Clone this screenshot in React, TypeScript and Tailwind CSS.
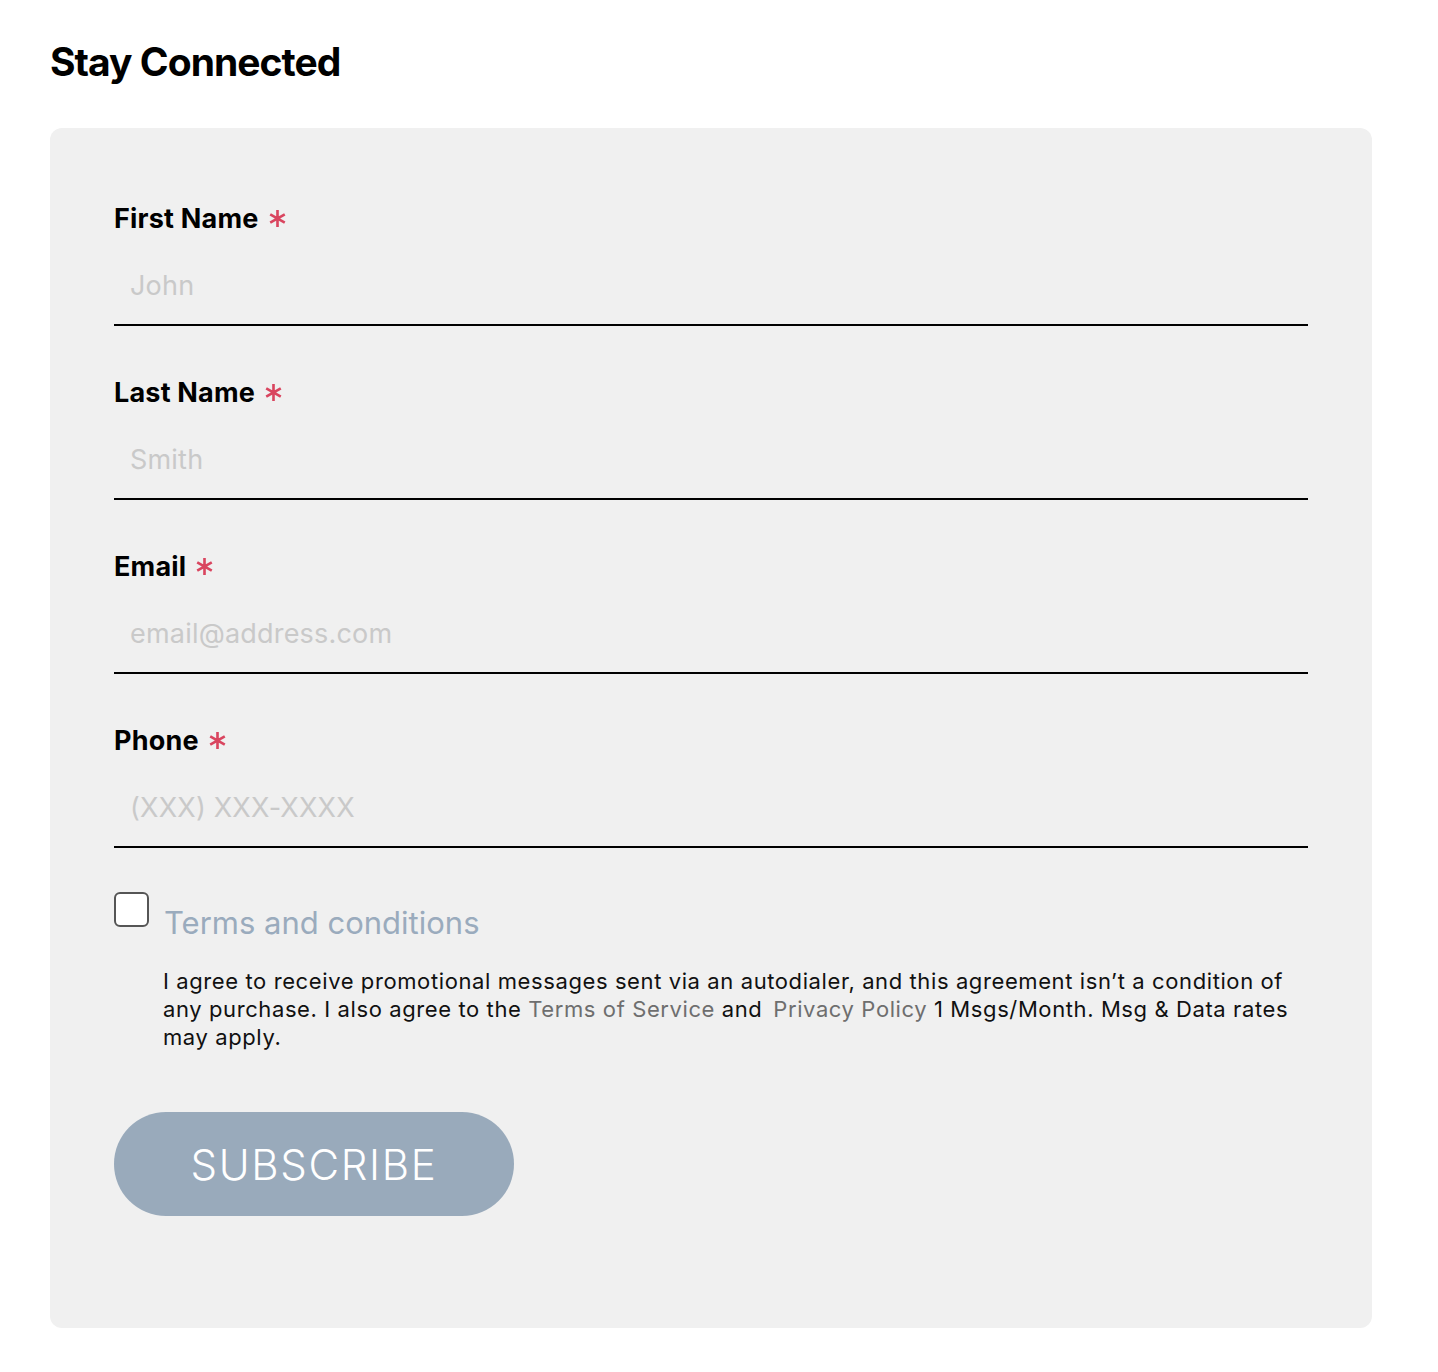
import { useState } from "react"

const fields = [
  { id: "first", label: "First Name", placeholder: "John", type: "text" },
  { id: "last", label: "Last Name", placeholder: "Smith", type: "text" },
  { id: "email", label: "Email", placeholder: "email@address.com", type: "email" },
  { id: "phone", label: "Phone", placeholder: "(XXX) XXX-XXXX", type: "tel" },
]

function Asterisk() {
  return (
    <svg viewBox="0 0 18 18" className="ml-[9px] h-[19px] w-[19px]" fill="none" stroke="#d9455f" strokeWidth="2.5">
      <path d="M9 1v16M2.1 5l13.8 8M2.1 13l13.8-8" />
    </svg>
  )
}

export default function App() {
  const [agreed, setAgreed] = useState(false)

  return (
    <div className="min-h-screen bg-white px-[50px] pt-[34px] pb-[44px] font-['Inter',sans-serif] text-black">
      <h2 className="text-[39px] font-bold leading-[56px] tracking-[-0.025em]">Stay Connected</h2>

      <form
        className="mt-[38px] w-[1322px] rounded-[12px] bg-[#f0f0f0] px-[64px] pt-[75px] pb-[112px]"
        onSubmit={(e) => e.preventDefault()}
      >
        <div className="flex flex-col gap-[51px]">
          {fields.map((f) => (
            <div key={f.id}>
              <label htmlFor={f.id} className="flex items-center text-[27px] font-bold leading-[31px] tracking-[0.2px]">
                {f.label}
                <Asterisk />
              </label>
              <input
                id={f.id}
                type={f.type}
                placeholder={f.placeholder}
                className="mt-[12px] block h-[80px] w-full border-b-2 border-black bg-transparent px-[16px] text-[27px] tracking-[0.2px] outline-none placeholder:text-[#c9c9c9]"
              />
            </div>
          ))}
        </div>

        <div className="mt-[44px] flex items-start">
          <input
            type="checkbox"
            checked={agreed}
            onChange={(e) => setAgreed(e.target.checked)}
            className="h-[35px] w-[35px] shrink-0 appearance-none rounded-[6px] border-2 border-[#555] bg-white checked:bg-[#99aabb]"
          />
          <span className="ml-[15px] mt-[13px] text-[31px] leading-[36px] text-[#9aabbd]">Terms and conditions</span>
        </div>

        <p className="mt-[26px] pl-[49px] text-[22px] leading-[28px] tracking-[0.6px] text-[#111]">
          I agree to receive promotional messages sent via an autodialer, and this agreement isn’t a condition of any
          purchase. I also agree to the <a className="text-[#6e6e6e]">Terms of Service</a> and{" "}
          <a className="ml-[4px] text-[#6e6e6e]">Privacy Policy</a> 1 Msgs/Month. Msg &amp; Data rates may apply.
        </p>

        <button
          type="submit"
          className="mt-[61px] h-[104px] w-[400px] rounded-full bg-[#99aabb] text-[42px] font-light tracking-[0.04em] text-white"
        >
          SUBSCRIBE
        </button>
      </form>
    </div>
  )
}
